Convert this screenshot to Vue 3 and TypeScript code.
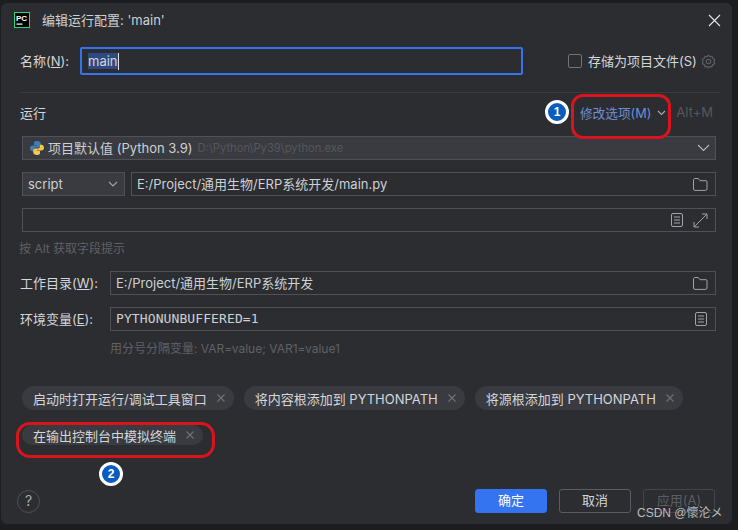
<script setup lang="ts">
const chips: string[] = ['启动时打开运行/调试工具窗口', '将内容根添加到 PYTHONPATH', '将源根添加到 PYTHONPATH']
</script>

<template>
  <div class="screen">
    <div class="dialog">
      <header class="titlebar">
        <svg class="logo" width="16" height="16" viewBox="0 0 16 16">
          <rect x="0.5" y="0.5" width="15" height="15" fill="#000" stroke="#21d789" />
          <text x="2" y="8.500" font-size="8" font-weight="700" fill="#fff" font-family="Liberation Sans">PC</text>
          <rect x="2.500" y="11.500" width="6" height="1.200" fill="#fff" />
        </svg>
        <span class="title">编辑运行配置: 'main'</span>
        <svg class="close" width="13" height="13" viewBox="0 0 13 13">
          <path d="M1 1l11 11M12 1L1 12" stroke="#e4e5e8" stroke-width="1.100" fill="none" />
        </svg>
      </header>

      <div class="name-row">
        <label class="lbl name-lbl">名称(<u>N</u>):</label>
        <div class="name-input"><span class="sel">main</span><span class="caret"></span></div>
        <span class="check"></span>
        <span class="lbl store">存储为项目文件(S)</span>
        <svg class="gear" width="15" height="15" viewBox="0 0 15 15" fill="none" stroke="#5d6066" stroke-width="1.100">
          <path d="M7.500 1l1.400 1.600 2.100-.3.700 2 1.900 1-.6 2.200.6 2.200-1.900 1-.7 2-2.100-.3L7.500 14l-1.400-1.600-2.100.3-.7-2-1.900-1 .6-2.200-.6-2.200 1.900-1 .7-2 2.100.3z" />
          <circle cx="7.500" cy="7.500" r="2.200" />
        </svg>
      </div>

      <div class="sep"></div>

      <div class="run-row">
        <span class="lbl">运行</span>
        <span class="lbl modify">修改选项(M)</span>
        <svg class="mod-chev" width="9" height="6" viewBox="0 0 9 6"><path d="M1 1l3.500 3.500L8 1" stroke="#a9acb2" stroke-width="1.100" fill="none" /></svg>
        <span class="lbl shortcut">Alt+M</span>
      </div>

      <div class="field combo interp">
        <svg class="py" width="16" height="16" viewBox="0 0 16 16">
          <path d="M8 1C5 1 5 2.300 5 3.500V5h3.200v.6H3.500C2 5.600 1 6.800 1 8.300s1 2.900 2.400 2.900H5V9.500c0-1.200 1-2.100 2.200-2.100h2.700c1 0 1.800-.8 1.800-1.800v-2.100C11.700 2 10.300 1 8 1z" fill="#3f7fb5" />
          <path d="M8 15c3 0 3-1.300 3-2.500V11H7.800v-.6h4.700c1.500 0 2.500-1.200 2.500-2.700s-1-2.900-2.400-2.900H11v1.700c0 1.200-1 2.100-2.200 2.100H6.100c-1 0-1.800.8-1.800 1.800v2.100C4.300 14 5.700 15 8 15z" fill="#f2c94c" />
        </svg>
        <span class="val">项目默认值 (Python 3.9)</span>
        <span class="path">D:\Python\Py39\python.exe</span>
        <svg class="chev wide" width="13" height="8" viewBox="0 0 13 8"><path d="M1 1l5.500 5.500L12 1" stroke="#b4b7bc" stroke-width="1.100" fill="none" /></svg>
      </div>

      <div class="script-row">
        <div class="field combo script">
          <span class="val">script</span>
          <svg class="chev" width="10" height="6" viewBox="0 0 10 6"><path d="M1 1l4 4 4-4" stroke="#a0a3a9" stroke-width="1.100" fill="none" /></svg>
        </div>
        <div class="field grow">
          <span class="val">E:/Project/通用生物/ERP系统开发/main.py</span>
          <svg class="folder" width="15" height="13" viewBox="0 0 15 13" fill="none" stroke="#a0a3a9"><path d="M.5 2c0-.8.6-1.500 1.400-1.500h3.300l1.800 2.200h6.100c.5 0 .9.400.9.900V11c0 .8-.6 1.400-1.400 1.400H1.900C1.100 12.400.5 11.800.5 11z" /></svg>
        </div>
      </div>

      <div class="field params">
        <svg class="doc" width="12" height="14" viewBox="0 0 12 14" fill="none" stroke="#a0a3a9"><rect x=".5" y=".5" width="11" height="13" rx="1.500" /><path d="M3 4h6M3 7h6M3 10h6" /></svg>
        <svg class="expand" width="15" height="15" viewBox="0 0 15 15" fill="none" stroke="#a0a3a9"><path d="M9 1h5v5M14 1L1 14M1 9v5h5" /></svg>
      </div>

      <div class="hint alt-hint">按 Alt 获取字段提示</div>

      <div class="form-row first">
        <label class="lbl form-lbl">工作目录(<u>W</u>):</label>
        <div class="field grow">
          <span class="val">E:/Project/通用生物/ERP系统开发</span>
          <svg class="folder" width="15" height="13" viewBox="0 0 15 13" fill="none" stroke="#a0a3a9"><path d="M.5 2c0-.8.6-1.500 1.400-1.500h3.300l1.800 2.200h6.100c.5 0 .9.400.9.900V11c0 .8-.6 1.400-1.400 1.400H1.900C1.100 12.400.5 11.800.5 11z" /></svg>
        </div>
      </div>

      <div class="form-row second">
        <label class="lbl form-lbl">环境变量(<u>E</u>):</label>
        <div class="field grow">
          <span class="val mono">PYTHONUNBUFFERED=1</span>
          <svg class="doc env-doc" width="12" height="14" viewBox="0 0 12 14" fill="none" stroke="#a0a3a9"><rect x=".5" y=".5" width="11" height="13" rx="1.500" /><path d="M3 4h6M3 7h6M3 10h6" /></svg>
        </div>
      </div>

      <div class="hint env-hint">用分号分隔变量: VAR=value; VAR1=value1</div>

      <div class="chips">
        <span v-for="c in chips" :key="c" class="chip">
          {{ c }}
          <svg class="x" width="8" height="8" viewBox="0 0 8 8"><path d="M.5.5l7 7M7.500.5l-7 7" stroke="#6f7278" stroke-width="1.100" fill="none" /></svg>
        </span>
      </div>
      <div class="chips second-chips">
        <span class="chip slim">
          在输出控制台中模拟终端
          <svg class="x" width="8" height="8" viewBox="0 0 8 8"><path d="M.5.5l7 7M7.500.5l-7 7" stroke="#6f7278" stroke-width="1.100" fill="none" /></svg>
        </span>
      </div>

      <footer class="footer">
        <span class="help">?</span>
        <button class="btn primary">确定</button>
        <button class="btn">取消</button>
        <button class="btn disabled">应用(A)</button>
      </footer>

      <span class="ring ring-top"></span>
      <span class="ring ring-bottom"></span>
      <span class="badge badge-1">1</span>
      <span class="badge badge-2">2</span>
      <span class="mark">CSDN @懷沦メ</span>
    </div>
  </div>
</template>

<style>
html, body { margin: 0; background: #1c1d20; }
</style>

<style scoped>
.screen {
  width: 738px;
  height: 530px;
  box-sizing: border-box;
  padding: 3px 6px 6px 1px;
  background: #1c1d20;
  overflow: hidden;
  font-family: "Inter", "Noto Sans CJK SC", sans-serif;
  font-size: 13px;
  color: #d4d6da;
}
.dialog {
  position: relative;
  height: 521px;
  box-sizing: border-box;
  background: #2b2d30;
  border-radius: 6px;
  padding: 0 16px 0 19px;
}
.titlebar {
  display: flex;
  align-items: center;
  height: 34px;
  margin-left: -6px;
  gap: 12px;
}
.title { font-size: 13px; color: #ced0d5; padding-bottom: 1px; }
.close { margin-left: auto; margin-right: -5px; }
.name-row { display: flex; align-items: center; height: 28px; margin-top: 10px; }
.lbl { color: #d4d6da; font-size: 13px; white-space: nowrap; padding-bottom: 2px; }
.name-lbl { width: 60px; flex-shrink: 0; }
.name-input {
  width: 443px;
  flex-shrink: 0;
  height: 28px;
  box-sizing: border-box;
  border: 2px solid #3574f0;
  border-radius: 2px;
  display: flex;
  align-items: center;
  padding-left: 6px;
}
.sel { background: #2f4a80; color: #d4d6da; line-height: 16px; }
.caret { width: 1px; height: 17px; background: #e0e0e0; }
.check {
  width: 14px;
  height: 14px;
  box-sizing: border-box;
  flex-shrink: 0;
  border: 1px solid #6f737a;
  border-radius: 2px;
  margin-left: 45px;
}
.store { margin-left: 6px; }
.gear { margin-left: 4px; flex-shrink: 0; }
.sep { height: 1px; background: #393b40; margin: 17px -4px 0 0; }
.run-row { display: flex; align-items: center; height: 20px; margin-top: 10px; }
.modify { color: #6b8fdc; margin-left: auto; font-size: 12.700px; }
.mod-chev { margin-left: 6px; }
.shortcut { color: #56585d; margin-left: 10px; margin-right: 3px; }
.field {
  box-sizing: border-box;
  height: 24px;
  border: 1px solid #4e5157;
  display: flex;
  align-items: center;
  padding: 0 6px 0 5px;
}
.combo { background: #393b40; }
.interp { margin: 13px 0 0 2px; padding-left: 6px; }
.py { margin-right: 3px; }
.val { color: #cdd0d4; font-size: 13px; white-space: nowrap; padding-bottom: 1px; }
.path { color: #55575c; font-size: 11.200px; margin-left: 5px; white-space: nowrap; }
.chev { margin-left: auto; }
.chev.wide { margin-right: -1px; }
.script-row { display: flex; gap: 6px; margin: 12px 0 0 2px; }
.script { width: 103px; }
.grow { flex: 1; min-width: 0; }
.folder { margin-left: auto; margin-right: 1px; }
.params { margin: 12px 0 0 2px; justify-content: flex-end; gap: 10px; }
.expand { margin-right: 1px; }
.hint { color: #5f6166; font-size: 12px; }
.alt-hint { margin: 9px 0 0 -1px; height: 16px; line-height: 16px; }
.form-row { display: flex; align-items: center; }
.form-row.first { margin-top: 14px; }
.form-row.second { margin-top: 12px; }
.form-lbl { width: 90px; flex-shrink: 0; }
.mono { font-family: "DejaVu Sans Mono", monospace; font-size: 13px; letter-spacing: .1px; }
.env-doc { margin-left: auto; margin-right: 2px; }
.env-hint { margin: 10px 0 0 90px; height: 16px; line-height: 16px; }
.chips { display: flex; gap: 10px; margin: 29px 0 0 2px; }
.second-chips { margin-top: 15px; }
.chip {
  display: flex;
  align-items: center;
  height: 24px;
  padding: 0 9px 0 11px;
  border-radius: 12px;
  background: #393b40;
  color: #d4d6da;
  font-size: 13px;
  white-space: nowrap;
}
.slim { height: 20px; }
.x { margin-left: 10px; }
.footer { display: flex; align-items: center; margin-top: 44px; padding-right: 1px; gap: 12px; }
.help {
  width: 23px;
  height: 23px;
  box-sizing: border-box;
  border: 1px solid #4e5157;
  border-radius: 50%;
  margin: 0 auto 0 -3px;
  text-align: center;
  line-height: 20px;
  color: #a6a9af;
  font-size: 14px;
}
.btn {
  width: 72px;
  height: 24px;
  box-sizing: border-box;
  border: 1px solid #5a5d63;
  border-radius: 3px;
  background: transparent;
  color: #d4d6da;
  font-family: inherit;
  font-size: 13px;
  padding: 0 0 3px;
}
.primary { background: #3574f0; border-color: #3574f0; color: #fff; }
.disabled { color: #5a5d63; border-color: #43454a; }
.ring {
  position: absolute;
  box-sizing: border-box;
  border: 3px solid #d9141e;
  pointer-events: none;
}
.ring-top { left: 570px; top: 91px; width: 100px; height: 45px; border-radius: 12px; }
.ring-bottom { left: 15px; top: 419px; width: 199px; height: 36px; border-radius: 14px; }
.badge {
  position: absolute;
  box-sizing: border-box;
  width: 24px;
  height: 24px;
  border: 3px solid #fff;
  border-radius: 50%;
  background: #0b5cc0;
  color: #fff;
  font: 700 12px/18px "Liberation Sans", sans-serif;
  text-align: center;
}
.badge-1 { left: 544px; top: 97px; }
.badge-2 { left: 98px; top: 459px; }
.mark {
  position: absolute;
  left: 636px;
  top: 502px;
  color: #b9bbbf;
  font-size: 12px;
  line-height: 16px;
  white-space: nowrap;
  font-family: "Liberation Sans", "Noto Sans CJK SC", sans-serif;
}
</style>
